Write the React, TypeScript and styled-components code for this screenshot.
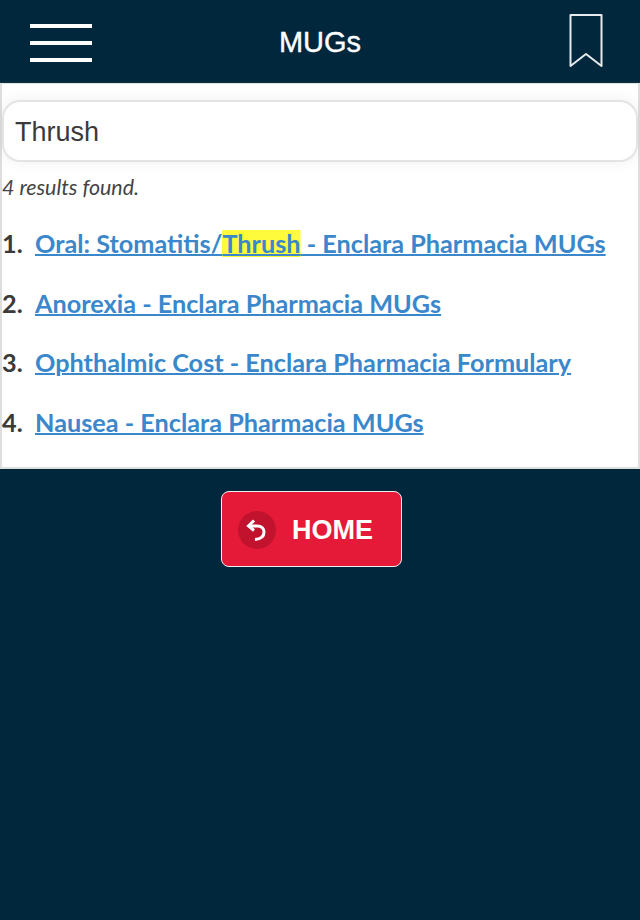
import styled, { createGlobalStyle } from 'styled-components';

const GlobalStyle = createGlobalStyle`
	html,
	body {
		margin: 0;
		padding: 0;
		background-color: #01273c;
	}
`;

const Page = styled.div`
	width: 640px;
	height: 920px;
	overflow: hidden;
	background-color: #01273c;
`;

const Header = styled.header`
	height: 83px;
	box-sizing: border-box;
	padding: 2px 30px 0;
	display: grid;
	grid-template-columns: 1fr auto 1fr;
	align-items: center;
	border-bottom: 1px solid #0e3447;
`;

const MenuButton = styled.div`
	width: 62px;
	height: 38px;
	margin-top: 2px;
	display: flex;
	flex-direction: column;
	justify-content: space-between;
	span {
		display: block;
		height: 4px;
		background-color: #fff;
	}
`;

const Title = styled.h1`
	margin: 0;
	font-family: 'Liberation Sans', Arial, sans-serif;
	font-size: 29px;
	font-weight: 400;
	color: #fff;
	-webkit-text-stroke: 0.4px #fff;
`;

const BookmarkIcon = styled.svg`
	justify-self: end;
	margin-right: 7px;
`;

const Panel = styled.main`
	height: 386px;
	box-sizing: border-box;
	padding: 16px 0 0 0;
	background-color: #fff;
	border: 1px solid #dedede;
	border-width: 1px 2px 2px 2px;
`;

const SearchBox = styled.div`
	height: 62px;
	box-sizing: border-box;
	display: flex;
	align-items: center;
	padding: 2px 0 0 11px;
	border: 2px solid #e4e4e4;
	border-radius: 18px;
	box-shadow: 0 0 14px rgba(0, 0, 0, 0.07);
	font-family: 'Liberation Sans', Arial, sans-serif;
	font-size: 27px;
	color: #3a3a3a;
`;

const ResultCount = styled.p`
	margin: 11px 0 0 0;
	font-family: 'Lato', sans-serif;
	font-size: 21.4px;
	font-style: italic;
	line-height: 28px;
	color: #444;
`;

const Results = styled.ol`
	list-style: none;
	margin: 26px 0 0 0;
	padding: 0;
`;

const ResultItem = styled.li`
	display: flex;
	height: 59.7px;
	font-family: 'Lato', sans-serif;
	font-size: 25.25px;
	font-weight: 700;
	line-height: 32px;
	color: #3a3a3a;
`;

const Num = styled.span`
	width: 33px;
`;

const ResultLink = styled.a`
	color: #3a87cc;
	text-decoration: underline;
	text-decoration-thickness: 2px;
	mark {
		background: linear-gradient(#fdfb3c, #fdfb3c) center / 100% 27px no-repeat;
		color: inherit;
	}
`;

const Footer = styled.div`
	display: flex;
	padding: 22px 0 0 221px;
`;

const HomeButton = styled.button`
	width: 181px;
	height: 76px;
	box-sizing: border-box;
	display: flex;
	align-items: center;
	gap: 16px;
	padding: 2px 0 0 16px;
	background-color: #e51a38;
	border: 1px solid #f0f0f0;
	border-radius: 8px;
	font-family: 'Liberation Sans', Arial, sans-serif;
	font-size: 27px;
	font-weight: 700;
	color: #fff;
`;

const HomeIcon = styled.span`
	width: 38px;
	height: 38px;
	display: flex;
	align-items: center;
	justify-content: center;
	border-radius: 50%;
	background-color: #c1132e;
`;

const items = [
	{ before: 'Oral: Stomatitis/', hit: 'Thrush', after: ' - Enclara Pharmacia MUGs' },
	{ before: 'Anorexia - Enclara Pharmacia MUGs' },
	{ before: 'Ophthalmic Cost - Enclara Pharmacia Formulary' },
	{ before: 'Nausea - Enclara Pharmacia MUGs' },
];

function App() {
	return (
		<Page>
			<GlobalStyle />
			<Header>
				<MenuButton>
					<span />
					<span />
					<span />
				</MenuButton>
				<Title>MUGs</Title>
				<BookmarkIcon width="34" height="56" viewBox="0 0 34 56" fill="none">
					<path
						d="M1.5 1 H32.5 V52 L17 40 L1.5 52 Z"
						stroke="#e6eaec"
						strokeWidth="2"
						strokeLinejoin="round"
					/>
				</BookmarkIcon>
			</Header>
			<Panel>
				<SearchBox>Thrush</SearchBox>
				<ResultCount>4 results found.</ResultCount>
				<Results>
					{items.map((item, i) => (
						<ResultItem key={item.before}>
							<Num>{i + 1}.</Num>
							<ResultLink>
								{item.before}
								{item.hit && <mark>{item.hit}</mark>}
								{item.after}
							</ResultLink>
						</ResultItem>
					))}
				</Results>
			</Panel>
			<Footer>
				<HomeButton>
					<HomeIcon>
						<svg width="24" height="24" viewBox="0 0 24 24" fill="none">
							<path d="M9 2.5 L3.5 8 L9 12.5" stroke="#fff" strokeWidth="3" />
							<path
								d="M4 8 H12 C17 8 19 11 19 14 C19 18 16 21 10 21.5"
								stroke="#fff"
								strokeWidth="3"
							/>
						</svg>
					</HomeIcon>
					HOME
				</HomeButton>
			</Footer>
		</Page>
	);
}

export default App;
